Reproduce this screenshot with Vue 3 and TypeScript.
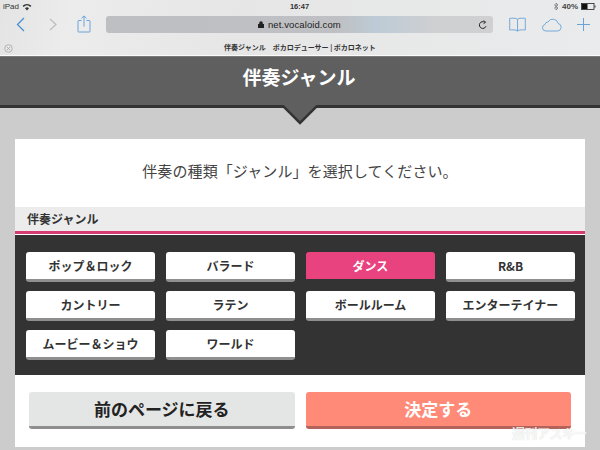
<script setup lang="ts">
const genres: string[] = ['ポップ&ロック', 'バラード', 'ダンス', 'R&B', 'カントリー', 'ラテン', 'ボールルーム', 'エンターテイナー', 'ムービー&ショウ', 'ワールド']
const selected = 'ダンス'
</script>

<template>
  <div class="screen">
    <div class="chrome">
      <div class="status">
        <div class="st-left">
          <span>iPad</span>
          <svg width="10" height="8" viewBox="0 0 10 8"><path d="M5 7.5 7 5.2A3 3 0 0 0 3 5.2ZM1.6 3.9A5 5 0 0 1 8.4 3.9L9.4 2.8A6.6 6.6 0 0 0 .6 2.8Z" fill="#333"/></svg>
        </div>
        <span class="st-time">16:47</span>
        <div class="st-right">
          <svg width="6" height="9" viewBox="0 0 6 9"><path d="M1 2.5 5 6 3 8V1L5 3 1 6.500" fill="none" stroke="#777" stroke-width=".8"/></svg>
          <span>40%</span>
          <svg width="15" height="7" viewBox="0 0 15 7"><rect x=".5" y=".5" width="12.500" height="6" fill="none" stroke="#222" stroke-width=".8"/><rect x="1" y="1" width="5.500" height="5" fill="#111"/><rect x="13.500" y="2.500" width="1" height="2" fill="#333"/></svg>
        </div>
      </div>
      <div class="toolbar">
        <div class="nav-left">
          <svg class="ic-back" width="10" height="15" viewBox="0 0 10 15"><path d="M8 1 1.500 7.500 8 14" fill="none" stroke="#4a90d0" stroke-width="1.300"/></svg>
          <svg class="ic-fwd" width="10" height="15" viewBox="0 0 10 15"><path d="M2 2 8 7.500 2 13" fill="none" stroke="#b9bbbd" stroke-width="1.100"/></svg>
          <svg class="ic-share" width="14" height="18" viewBox="0 0 14 18"><path d="M4.500 5.500H1.500a1 1 0 0 0-.5.500V16.500a.6.6 0 0 0 .5.500H12.500a.6.6 0 0 0 .5-.500V6a1 1 0 0 0-.5-.500H9.500M7 11.500V1M4.500 3.300 7 .9 9.500 3.300" fill="none" stroke="#6aa3d8" stroke-width="1"/></svg>
        </div>
        <div class="url">
          <svg width="6" height="7" viewBox="0 0 6 7"><path d="M1.200 3V2a1.800 1.800 0 0 1 3.600 0v1H6v4H0V3Z" fill="#222"/></svg>
          <span>net.vocaloid.com</span>
          <svg class="reload" width="10" height="10" viewBox="0 0 10 10"><path d="M8 6.200A3.400 3.400 0 1 1 6.700 2.200M5.800 .5 7.600 2.300 5.600 3.600" fill="none" stroke="#222" stroke-width="1"/></svg>
        </div>
        <div class="nav-right">
          <svg width="17" height="15" viewBox="0 0 17 15"><path d="M8.500 2.200C7 1 3 1 .7 1.400V13C3 12.700 7 12.700 8.500 13.800 10 12.700 14 12.700 16.300 13V1.400C14 1 10 1 8.500 2.200ZM8.500 2.200V14.500" fill="none" stroke="#6aa3d8" stroke-width=".9"/></svg>
          <svg width="21" height="14" viewBox="0 0 21 14"><path d="M5 13H16.500A3.800 3.800 0 0 0 17.200 5.500 5.500 5.500 0 0 0 7 4 3 3 0 0 0 4 6.500 3.300 3.300 0 0 0 5 13Z" fill="none" stroke="#6aa3d8" stroke-width=".9"/></svg>
          <svg width="13" height="13" viewBox="0 0 13 13"><path d="M6.500 0V13M0 6.500H13" stroke="#6aa3d8" stroke-width="1"/></svg>
        </div>
      </div>
      <div class="tabbar">
        <svg class="tab-close" width="9" height="9" viewBox="0 0 9 9"><circle cx="4.500" cy="4.500" r="3.800" fill="none" stroke="#aaa" stroke-width=".8"/><path d="M2.800 2.800 6.200 6.200M6.200 2.800 2.800 6.200" stroke="#aaa" stroke-width=".8"/></svg>
        <span class="tab-title">伴奏ジャンル&emsp;ボカロデューサー | ボカロネット</span>
      </div>
    </div>

    <header class="hero">
      <h1>伴奏ジャンル</h1>
      <svg class="notch" width="36" height="20" viewBox="0 0 36 20"><path d="M0 0H36L18 18Z" fill="#5f5f5f"/><path d="M0 0 18 18 36 0" fill="none" stroke="#333" stroke-width="2.500"/></svg>
    </header>

    <main class="card">
      <p class="intro">伴奏の種類「ジャンル」を選択してください。</p>
      <h2 class="section">伴奏ジャンル</h2>
      <div class="genres">
        <div v-for="g in genres" :key="g" class="genre" :class="{ on: g === selected }">{{ g.replace(/&(?!B)/, '＆') }}</div>
      </div>
      <div class="actions">
        <div class="act back">前のページに戻る</div>
        <div class="act go">決定する</div>
      </div>
    </main>
    <span class="mark">週刊アスキー</span>
  </div>
</template>

<style>
html, body { margin: 0; overflow: hidden; }
</style>

<style scoped>
.screen {
  position: relative;
  width: 600px;
  height: 450px;
  overflow: hidden;
  background: #cccccc;
  font-family: "Noto Sans CJK JP", "Liberation Sans", sans-serif;
  color: #333;
}
.chrome {
  height: 55px;
  background: linear-gradient(100deg, #e4e4e4 0%, #ececec 12%, #e6e6e6 40%, #eaebec 100%);
  border-bottom: 1px solid #fafafa;
  display: flex;
  flex-direction: column;
}
.status {
  height: 13px;
  padding: 0 4px 0 3px;
  display: grid;
  grid-template-columns: 1fr auto 1fr;
  align-items: center;
  font: 8px/12px "Liberation Sans", sans-serif;
  color: #333;
}
.st-left { display: flex; align-items: center; gap: 3px; }
.st-time { font-weight: 700; font-size: 7.500px; }
.st-right { display: flex; align-items: center; justify-content: flex-end; gap: 3px; font-weight: 700; color: #444; }
.toolbar {
  height: 21px;
  margin-top: 1px;
  padding: 0 10px 0 16px;
  display: flex;
  align-items: center;
}
.nav-left { width: 90px; display: flex; align-items: center; }
.ic-fwd { margin-left: 22px; }
.ic-share { margin-left: 19px; margin-top: -1px; }
.url {
  position: relative;
  width: 388px;
  height: 17px;
  border-radius: 3px;
  background: linear-gradient(90deg, #bebfc2 0%, #bfc0c3 60%, #bdcbd6 70%, #cfd0d2 85%, #d0d0d2 100%);
  display: flex;
  align-items: center;
  justify-content: center;
  gap: 4px;
  font: 9.500px/17px "Liberation Sans", sans-serif;
  letter-spacing: .1px;
  color: #222;
}
.reload { position: absolute; right: 5px; top: 4px; }
.nav-right {
  flex: 1;
  display: flex;
  align-items: center;
  padding-left: 16px;
  gap: 15px;
}
.tabbar {
  position: relative;
  flex: 1;
  display: flex;
  align-items: center;
  justify-content: center;
  padding-top: 4px;
}
.tab-close { position: absolute; left: 4px; top: 9px; }
.tab-title { font-size: 7px; font-weight: 700; color: #333; }
.hero {
  position: relative;
  height: 48px;
  border-top: 1px solid #7a7a7a;
  border-bottom: 3px solid #333;
  background: #5f5f5f;
  text-align: center;
}
.hero h1 {
  margin: 0;
  font-size: 19px;
  font-weight: 700;
  line-height: 39px;
  color: #fff;
  padding-right: 2px;
}
.notch { position: absolute; left: 282px; top: 48px; }
.card {
  margin: 31px 15px 0;
  height: 308px;
  background: #fff;
  display: flex;
  flex-direction: column;
}
.intro {
  margin: 0;
  height: 68px;
  line-height: 64px;
  text-align: center;
  font-size: 15px;
  letter-spacing: .1px;
  color: #444;
}
.section {
  margin: 0;
  height: 24px;
  padding-left: 12px;
  background: #ececec;
  border-bottom: 3px solid #d63c72;
  font-size: 12px;
  font-weight: 700;
  line-height: 24px;
  color: #333;
}
.genres {
  height: 140px;
  box-sizing: border-box;
  margin-top: 1px;
  padding: 17px 11px 0;
  background: #333;
  display: grid;
  grid-template-columns: repeat(4, 129px);
  grid-auto-rows: 30px;
  column-gap: 11px;
  row-gap: 9px;
}
.genre {
  box-sizing: border-box;
  height: 30px;
  background: #fff;
  border-radius: 3px;
  border-bottom: 3px solid #8f8f8f;
  text-align: center;
  font-size: 12px;
  font-weight: 700;
  line-height: 27px;
  color: #333;
}
.genre.on {
  background: #e8437e;
  border-bottom-color: #333;
  color: #fff;
}
.actions {
  display: flex;
  gap: 11px;
  padding: 17px 14px 0;
}
.act {
  flex: 1;
  box-sizing: border-box;
  height: 37px;
  border-radius: 3px;
  border-bottom: 3px solid;
  text-align: center;
  font-size: 17px;
  font-weight: 700;
  line-height: 34px;
}
.back { background: #e4e5e5; border-color: #8e8e8e; color: #222; }
.go { background: #ff8a78; border-color: #b5635a; color: #fff; }
.mark {
  position: absolute;
  right: 13px;
  bottom: 8px;
  font-size: 13px;
  font-weight: 700;
  letter-spacing: -.5px;
  color: rgba(255,255,255,.8);
  text-shadow: 0 0 1px rgba(150,150,150,.4);
}
</style>
